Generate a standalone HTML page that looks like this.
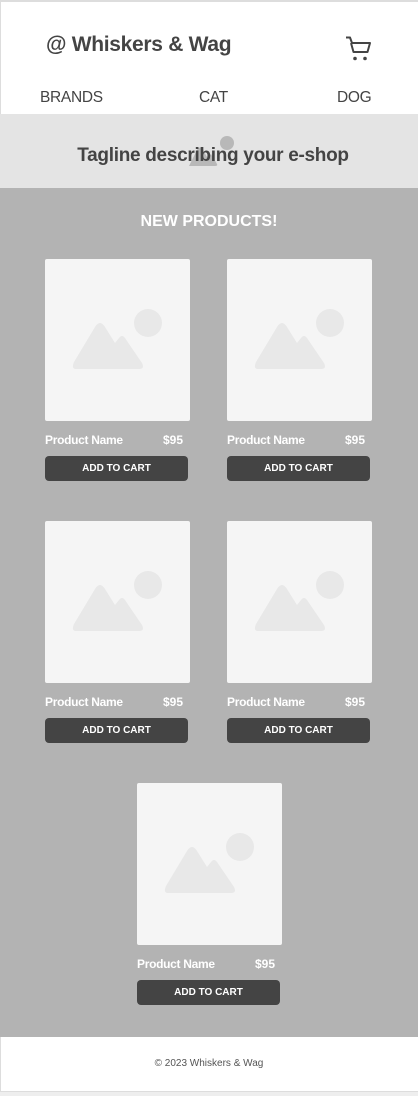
<!DOCTYPE html>
<html><head><meta charset="utf-8"><style>
*{box-sizing:border-box;margin:0;padding:0}
body{width:418px;height:1096px;background:#eee;font-family:"Liberation Sans",sans-serif;position:relative;overflow:hidden}
.page{position:absolute;left:0;top:0;width:418px;height:1092px;background:#fff;border-top:2px solid #ddd;border-left:1px solid #ddd;border-bottom:1px solid #ddd}
.abs{position:absolute}
.logo{left:46px;top:33px;font-size:21px;font-weight:bold;color:#444;letter-spacing:-0.3px}
.nav{top:89px;font-size:15.5px;color:#444;letter-spacing:-0.3px}
.banner{left:0;top:114px;width:418px;height:74px;background:#e4e4e4}
.tag{left:4px;top:145px;width:418px;text-align:center;font-size:19px;font-weight:bold;color:#444;letter-spacing:-0.3px}
.main{left:0;top:188px;width:418px;height:849px;background:#b3b3b3}
.np{left:0;top:213px;width:418px;text-align:center;color:#fff;font-weight:bold;font-size:16px}
.card{position:absolute;width:145px}
.img{width:145px;height:162px;background:#f5f5f5;border-radius:2px;position:relative}
.img svg{position:absolute;left:0;top:0}
.nm{position:absolute;top:174px;left:0;color:#fff;font-weight:bold;font-size:12px;letter-spacing:-0.3px}
.pr{position:absolute;top:174px;left:118px;color:#fff;font-weight:bold;font-size:12px}
.btn{position:absolute;top:197px;left:0;width:143px;height:25px;background:#444;border-radius:4px;color:#fff;font-weight:bold;font-size:10px;text-align:center;line-height:25px}
.foot{left:0;top:1058px;width:418px;text-align:center;font-size:10px;color:#555}
</style></head><body>
<div class="page"></div>
<div class="abs logo">@ Whiskers &amp; Wag</div>
<svg class="abs" style="left:340px;top:30px" width="36" height="36" viewBox="340 30 36 36"><path d="M346 37.5h4l2 5.5h18l-2.5 9h-14L351 43" fill="none" stroke="#444" stroke-width="2" stroke-linejoin="round"/><circle cx="355" cy="58.5" r="1.8" fill="#444"/><circle cx="365" cy="58.5" r="1.8" fill="#444"/></svg>
<div class="abs nav" style="left:40px">BRANDS</div>
<div class="abs nav" style="left:199px">CAT</div>
<div class="abs nav" style="left:337px">DOG</div>
<div class="abs banner"></div>
<svg class="abs" style="left:185px;top:130px" width="50" height="40"><circle cx="42" cy="13" r="7" fill="#b8b8b8"/><path d="M4 36 L12 20 Q15 15 18 20 L22 27 L26 24 L32 34 Q33 36 30 36 Z" fill="#b8b8b8"/></svg>
<div class="abs tag">Tagline describing your e-shop</div>
<div class="abs main"></div>
<div class="abs np">NEW PRODUCTS!</div>

<div class="card" style="left:45px;top:259px"><div class="img"><svg width="145" height="162"><circle cx="103" cy="64" r="14" fill="#e8e8e8"/><path d="M31 110 Q26 110 29 103 L50 68 Q55 60 60 68 L70 84 L74 79 Q77 75 80 79 L97 104 Q100 110 94 110 Z" fill="#e8e8e8"/></svg></div><div class="nm">Product Name</div><div class="pr">$95</div><div class="btn">ADD TO CART</div></div>
<div class="card" style="left:227px;top:259px"><div class="img"><svg width="145" height="162"><circle cx="103" cy="64" r="14" fill="#e8e8e8"/><path d="M31 110 Q26 110 29 103 L50 68 Q55 60 60 68 L70 84 L74 79 Q77 75 80 79 L97 104 Q100 110 94 110 Z" fill="#e8e8e8"/></svg></div><div class="nm">Product Name</div><div class="pr">$95</div><div class="btn">ADD TO CART</div></div>
<div class="card" style="left:45px;top:521px"><div class="img"><svg width="145" height="162"><circle cx="103" cy="64" r="14" fill="#e8e8e8"/><path d="M31 110 Q26 110 29 103 L50 68 Q55 60 60 68 L70 84 L74 79 Q77 75 80 79 L97 104 Q100 110 94 110 Z" fill="#e8e8e8"/></svg></div><div class="nm">Product Name</div><div class="pr">$95</div><div class="btn">ADD TO CART</div></div>
<div class="card" style="left:227px;top:521px"><div class="img"><svg width="145" height="162"><circle cx="103" cy="64" r="14" fill="#e8e8e8"/><path d="M31 110 Q26 110 29 103 L50 68 Q55 60 60 68 L70 84 L74 79 Q77 75 80 79 L97 104 Q100 110 94 110 Z" fill="#e8e8e8"/></svg></div><div class="nm">Product Name</div><div class="pr">$95</div><div class="btn">ADD TO CART</div></div>
<div class="card" style="left:137px;top:783px"><div class="img"><svg width="145" height="162"><circle cx="103" cy="64" r="14" fill="#e8e8e8"/><path d="M31 110 Q26 110 29 103 L50 68 Q55 60 60 68 L70 84 L74 79 Q77 75 80 79 L97 104 Q100 110 94 110 Z" fill="#e8e8e8"/></svg></div><div class="nm">Product Name</div><div class="pr">$95</div><div class="btn">ADD TO CART</div></div>

<div class="abs foot">© 2023 Whiskers &amp; Wag</div>
</body></html>
